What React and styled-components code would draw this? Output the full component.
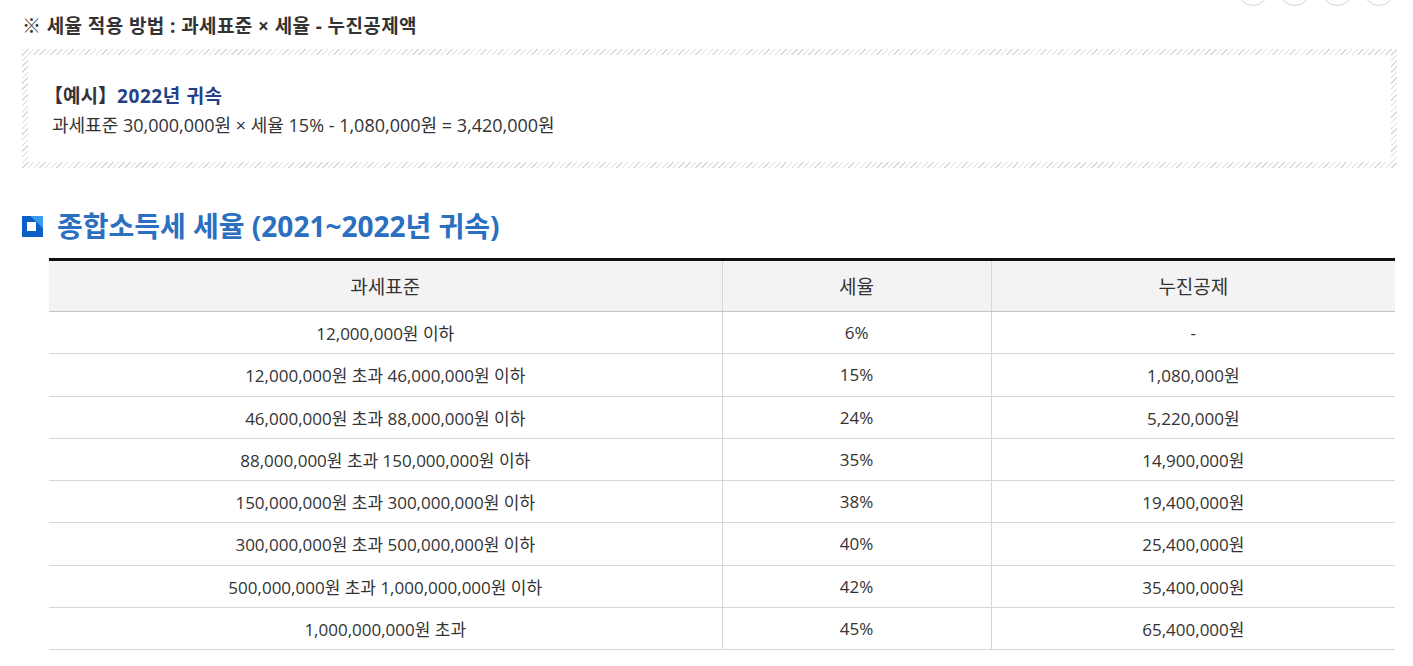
import React from 'react';
import styled, { createGlobalStyle } from 'styled-components';

const GlobalStyle = createGlobalStyle`
  html, body {
    margin: 0;
    padding: 0;
    background: #fff;
  }
  body {
    font-family: "Open Sans", "Noto Sans CJK KR", sans-serif;
    color: #333;
    overflow: hidden;
  }
`;

const Page = styled.div`
  position: relative;
  width: 1413px;
  padding: 12px 16px 0 22px;
  box-sizing: border-box;
`;

const ShareBar = styled.div`
  position: absolute;
  top: -26px;
  right: 18px;
  display: flex;
  gap: 10px;
`;

const ShareCircle = styled.span`
  width: 30px;
  height: 30px;
  border-radius: 50%;
  border: 1px solid #d6d6d6;
  background: #fff;
`;

const Formula = styled.h3`
  margin: 0;
  font-size: 19px;
  line-height: 28px;
  font-weight: 700;
  letter-spacing: 0.4px;
  color: #333;
`;

const HatchBox = styled.div`
  margin-top: 9px;
  padding: 6px;
  background: repeating-linear-gradient(
    135deg,
    #d9d9d9 0 1px,
    #fff 1px 4px
  );
`;

const HatchInner = styled.div`
  background: #fff;
  padding: 27px 24px 22px;
  font-size: 18px;
  line-height: 29px;
  color: #333;
`;

const ExampleTitle = styled.div`
  margin-left: -8px;
  font-size: 19px;
  font-weight: 700;
  color: #333;
`;

const Navy = styled.span`
  color: #243f86;
  letter-spacing: 0.6px;
`;

const SectionTitle = styled.h2`
  display: flex;
  align-items: center;
  gap: 14px;
  margin: 40px 0 0;
  font-size: 28px;
  line-height: 36px;
  font-weight: 700;
  color: #2b6fc0;
`;

const SquareIcon = styled.span`
  position: relative;
  flex: none;
  width: 21px;
  height: 21px;
  background: linear-gradient(225deg, #3a9af0 0 30%, #0d5fc8 30% 100%);

  &::after {
    content: '';
    position: absolute;
    left: 5px;
    top: 6px;
    width: 9px;
    height: 9px;
    background: #fff;
  }
`;

const Table = styled.table`
  width: 1346px;
  margin: 14px 0 0 27px;
  border-collapse: collapse;
  border-top: 3px solid #111;
  font-size: 17px;
  color: #333;
`;

const Th = styled.th`
  height: 50px;
  padding: 0;
  background: #f3f3f3;
  font-size: 19px;
  font-weight: 400;
  border-bottom: 1px solid #c4c4c4;
  & + & {
    border-left: 1px solid #d6d6d6;
  }
`;

const Td = styled.td`
  height: 41.25px;
  padding: 0;
  text-align: center;
  border-bottom: 1px solid #d6d6d6;
  & + & {
    border-left: 1px solid #d6d6d6;
  }
`;

const rows = [
  ['12,000,000원 이하', '6%', '-'],
  ['12,000,000원 초과 46,000,000원 이하', '15%', '1,080,000원'],
  ['46,000,000원 초과 88,000,000원 이하', '24%', '5,220,000원'],
  ['88,000,000원 초과 150,000,000원 이하', '35%', '14,900,000원'],
  ['150,000,000원 초과 300,000,000원 이하', '38%', '19,400,000원'],
  ['300,000,000원 초과 500,000,000원 이하', '40%', '25,400,000원'],
  ['500,000,000원 초과 1,000,000,000원 이하', '42%', '35,400,000원'],
  ['1,000,000,000원 초과', '45%', '65,400,000원'],
];

function App() {
  return (
    <Page>
      <GlobalStyle />
      <ShareBar>
        <ShareCircle />
        <ShareCircle />
        <ShareCircle />
        <ShareCircle />
      </ShareBar>

      <Formula>※ 세율 적용 방법 : 과세표준 × 세율 - 누진공제액</Formula>

      <HatchBox>
        <HatchInner>
          <ExampleTitle>
            【예시】<Navy>2022년 귀속</Navy>
          </ExampleTitle>
          <div>과세표준 30,000,000원 × 세율 15% - 1,080,000원 = 3,420,000원</div>
        </HatchInner>
      </HatchBox>

      <SectionTitle>
        <SquareIcon />
        종합소득세 세율 (2021~2022년 귀속)
      </SectionTitle>

      <Table>
        <colgroup>
          <col style={{ width: '50%' }} />
          <col style={{ width: '20%' }} />
          <col style={{ width: '30%' }} />
        </colgroup>
        <thead>
          <tr>
            <Th>과세표준</Th>
            <Th>세율</Th>
            <Th>누진공제</Th>
          </tr>
        </thead>
        <tbody>
          {rows.map((r) => (
            <tr key={r[0]}>
              <Td>{r[0]}</Td>
              <Td>{r[1]}</Td>
              <Td>{r[2]}</Td>
            </tr>
          ))}
        </tbody>
      </Table>
    </Page>
  );
}

export default App;
